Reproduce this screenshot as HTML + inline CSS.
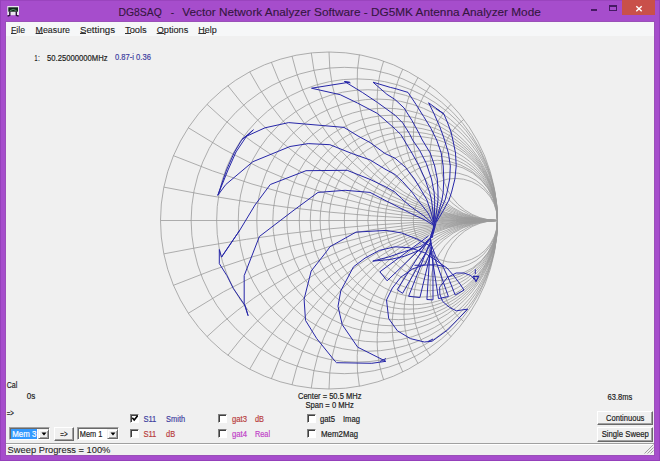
<!DOCTYPE html>
<html><head><meta charset="utf-8">
<style>
*{margin:0;padding:0;box-sizing:border-box}
html,body{width:660px;height:461px;overflow:hidden;background:#a64dcc}
.b{position:absolute}
svg{position:absolute;left:0;top:0}
text{font-family:"Liberation Sans",sans-serif}
</style></head><body>
<div class="b" style="left:0;top:0;width:660px;height:1px;background:#9a44be"></div>
<div class="b" style="left:0;top:0;width:1px;height:461px;background:#9540bb"></div>
<div class="b" style="left:659px;top:0;width:1px;height:461px;background:#9540bb"></div>
<div class="b" style="left:0;top:460px;width:660px;height:1px;background:#9540bb"></div>
<div class="b" style="left:5px;top:21px;width:650px;height:435px;background:#9a50b8"></div>
<div class="b" style="left:622px;top:0;width:33px;height:15px;background:#c9504a"></div>
<div class="b" style="left:6px;top:22px;width:648px;height:433px;background:#f0f0f0"></div>
<div class="b" style="left:6px;top:22px;width:648px;height:14px;background:#f6f7f8"></div>
<!-- status bar line -->
<div class="b" style="left:6px;top:443px;width:648px;height:1px;background:#a0a0a0"></div>
<div class="b" style="left:6px;top:444px;width:648px;height:1px;background:#ffffff"></div>

<svg width="660" height="461" viewBox="0 0 660 461">
<g fill="none" stroke="#9a9a9a" stroke-width="0.8">
<circle cx="329.0" cy="220.5" r="168.5"/>
<path d="M160.50,220.5H497.50"/>
<path d="M191.14,220.50a153.18,153.18 0 1,0 306.36,0a153.18,153.18 0 1,0 -306.36,0"/>
<path d="M216.67,220.50a140.42,140.42 0 1,0 280.83,0a140.42,140.42 0 1,0 -280.83,0"/>
<path d="M238.27,220.50a129.62,129.62 0 1,0 259.23,0a129.62,129.62 0 1,0 -259.23,0"/>
<path d="M256.79,220.50a120.36,120.36 0 1,0 240.71,0a120.36,120.36 0 1,0 -240.71,0"/>
<path d="M272.83,220.50a112.33,112.33 0 1,0 224.67,0a112.33,112.33 0 1,0 -224.67,0"/>
<path d="M286.88,220.50a105.31,105.31 0 1,0 210.62,0a105.31,105.31 0 1,0 -210.62,0"/>
<path d="M299.26,220.50a99.12,99.12 0 1,0 198.24,0a99.12,99.12 0 1,0 -198.24,0"/>
<path d="M310.28,220.50a93.61,93.61 0 1,0 187.22,0a93.61,93.61 0 1,0 -187.22,0"/>
<path d="M320.13,220.50a88.68,88.68 0 1,0 177.37,0a88.68,88.68 0 1,0 -177.37,0"/>
<path d="M329.00,220.50a84.25,84.25 0 1,0 168.50,0a84.25,84.25 0 1,0 -168.50,0"/>
<path d="M344.32,220.50a76.59,76.59 0 1,0 153.18,0a76.59,76.59 0 1,0 -153.18,0"/>
<path d="M357.08,220.50a70.21,70.21 0 1,0 140.42,0a70.21,70.21 0 1,0 -140.42,0"/>
<path d="M367.88,220.50a64.81,64.81 0 1,0 129.62,0a64.81,64.81 0 1,0 -129.62,0"/>
<path d="M377.14,220.50a60.18,60.18 0 1,0 120.36,0a60.18,60.18 0 1,0 -120.36,0"/>
<path d="M385.17,220.50a56.17,56.17 0 1,0 112.33,0a56.17,56.17 0 1,0 -112.33,0"/>
<path d="M401.21,220.50a48.14,48.14 0 1,0 96.29,0a48.14,48.14 0 1,0 -96.29,0"/>
<path d="M413.25,220.50a42.12,42.12 0 1,0 84.25,0a42.12,42.12 0 1,0 -84.25,0"/>
<path d="M497.50,220.50A1685.00,1685.00 0 0,1 163.84,187.13"/>
<path d="M497.50,220.50A1685.00,1685.00 0 0,0 163.84,253.87"/>
<path d="M497.50,220.50A842.50,842.50 0 0,1 173.46,155.69"/>
<path d="M497.50,220.50A842.50,842.50 0 0,0 173.46,285.31"/>
<path d="M497.50,220.50A561.67,561.67 0 0,1 188.33,127.75"/>
<path d="M497.50,220.50A561.67,561.67 0 0,0 188.33,313.25"/>
<path d="M497.50,220.50A421.25,421.25 0 0,1 206.98,104.29"/>
<path d="M497.50,220.50A421.25,421.25 0 0,0 206.98,336.71"/>
<path d="M497.50,220.50A337.00,337.00 0 0,1 227.90,85.70"/>
<path d="M497.50,220.50A337.00,337.00 0 0,0 227.90,355.30"/>
<path d="M497.50,220.50A280.83,280.83 0 0,1 249.71,71.82"/>
<path d="M497.50,220.50A280.83,280.83 0 0,0 249.71,369.18"/>
<path d="M497.50,220.50A240.71,240.71 0 0,1 271.33,62.18"/>
<path d="M497.50,220.50A240.71,240.71 0 0,0 271.33,378.82"/>
<path d="M497.50,220.50A210.62,210.62 0 0,1 292.01,56.11"/>
<path d="M497.50,220.50A210.62,210.62 0 0,0 292.01,384.89"/>
<path d="M497.50,220.50A187.22,187.22 0 0,1 311.31,52.93"/>
<path d="M497.50,220.50A187.22,187.22 0 0,0 311.31,388.07"/>
<path d="M497.50,220.50A168.50,168.50 0 0,1 329.00,52.00"/>
<path d="M497.50,220.50A168.50,168.50 0 0,0 329.00,389.00"/>
<path d="M497.50,220.50A140.42,140.42 0 0,1 359.39,54.76"/>
<path d="M497.50,220.50A140.42,140.42 0 0,0 359.39,386.24"/>
<path d="M497.50,220.50A120.36,120.36 0 0,1 383.65,61.11"/>
<path d="M497.50,220.50A120.36,120.36 0 0,0 383.65,379.89"/>
<path d="M497.50,220.50A105.31,105.31 0 0,1 402.84,69.04"/>
<path d="M497.50,220.50A105.31,105.31 0 0,0 402.84,371.96"/>
<path d="M497.50,220.50A93.61,93.61 0 0,1 418.02,77.43"/>
<path d="M497.50,220.50A93.61,93.61 0 0,0 418.02,363.57"/>
<path d="M497.50,220.50A84.25,84.25 0 0,1 430.10,85.70"/>
<path d="M497.50,220.50A84.25,84.25 0 0,0 430.10,355.30"/>
<path d="M497.50,220.50A67.40,67.40 0 0,1 451.02,104.29"/>
<path d="M497.50,220.50A67.40,67.40 0 0,0 451.02,336.71"/>
<path d="M497.50,220.50A56.17,56.17 0 0,1 463.80,119.40"/>
<path d="M497.50,220.50A56.17,56.17 0 0,0 463.80,321.60"/>
</g>
<g fill="none" stroke="#2626a8" stroke-width="1.0" stroke-linejoin="round">
<polyline points="373.0,82.2 390.3,87.4 395.0,88.5 408.0,92.4 415.8,104.1 423.6,116.5 430.8,128.2 436.7,140.0 441.2,153.0 443.2,166.0 443.8,179.0 443.2,192.1 441.9,200.0 438.5,212.0 435.5,222.0"/>
<polyline points="373.0,82.2 386.9,94.3 395.0,99.5 404.1,108.0 411.9,120.4 418.4,132.1 422.3,140.0 430.2,153.0 434.7,166.0 437.3,179.0 438.0,192.1 438.0,200.0 436.5,212.0 434.8,222.0"/>
<polyline points="428.6,102.8 443.8,113.9 447.7,123.0 451.0,132.1 452.9,140.0 455.5,153.0 456.2,166.0 454.9,179.0 451.6,192.1 449.0,200.0 443.0,211.0 436.5,222.0"/>
<polyline points="428.6,102.8 434.1,113.9 439.3,125.6 443.2,136.0 444.5,140.0 448.4,153.0 450.3,166.0 449.7,179.0 447.1,192.1 445.1,200.0 440.0,211.0 435.8,222.0"/>
<polyline points="436.0,108.5 443.8,113.9"/>
<polyline points="311.5,88.2 349.5,82.2 344.5,81.5 362.6,92.6 377.5,102.5 395.0,115.2 402.8,123.0 409.3,133.4 412.6,140.0 419.7,150.4 426.3,163.4 431.5,179.0 434.1,192.1 434.7,200.0 434.5,212.0 434.2,222.0"/>
<polyline points="311.5,88.2 340.2,94.7 357.4,103.0 377.3,113.4 395.0,128.8 400.9,134.7 404.1,140.0 411.9,153.0 419.1,166.0 425.0,179.0 429.5,192.1 431.5,200.0 433.0,212.0 433.8,222.0"/>
<polyline points="344.5,81.5 350.5,83.0"/>
<polyline points="242.1,139.3 246.3,136.3 265.0,127.8 288.7,122.6 344.0,127.4 358.0,136.0 370.0,142.5 385.0,153.5 395.0,158.2 405.4,167.3 414.5,179.0 422.3,192.1 426.9,200.0 431.0,212.0 433.5,222.0"/>
<polyline points="242.1,139.3 253.4,129.8"/>
<polyline points="253.4,129.8 246.0,137.0 236.0,152.0 228.0,170.0 217.8,195.3"/>
<polyline points="242.1,139.3 234.5,152.0 226.5,170.0 217.8,195.3"/>
<polyline points="217.8,195.3 225.8,184.5 252.9,161.7 290.0,146.5 308.2,143.6 329.9,144.7 351.6,153.4 370.0,159.9 385.0,169.1 395.0,174.5 402.8,181.7 411.9,192.1 417.8,200.0 428.0,213.0 433.0,223.0"/>
<polyline points="221.5,257.1 239.9,230.0 255.0,205.0 270.3,184.5 290.0,176.9 306.0,170.7 347.2,170.3 370.0,179.4 385.0,186.5 395.0,192.1 401.5,198.6 410.0,206.0 424.0,216.0 433.0,224.0"/>
<polyline points="239.9,230.0 221.5,257.1 219.3,249.5 219.3,263.6 226.9,275.6 233.4,288.6 245.3,305.9 248.1,315.7 244.2,303.8 244.2,275.6 259.4,236.5 294.1,210.0 318.0,192.4 345.1,190.3 370.0,192.4 385.0,200.3 395.0,205.4 412.0,214.0 425.0,220.0 433.0,225.0"/>
<polyline points="433.8,222.0 433.3,228.0 430.0,238.0"/>
<polyline points="434.6,222.0 433.8,228.0 430.7,238.0"/>
<polyline points="435.4,222.0 434.2,228.0 431.3,238.0"/>
<polyline points="436.2,222.0 434.7,228.0 432.0,238.0"/>
<polyline points="430.5,238.0 430.0,245.9 417.8,239.4 401.5,232.9 386.1,230.4 370.0,231.3 356.0,232.1 330.0,246.7 326.7,251.3 311.2,271.0 304.1,299.2 305.5,320.4 316.8,338.7 335.1,361.3 336.5,362.7 371.8,363.3 385.9,361.3 357.7,347.2 342.2,324.6 338.0,306.3 340.8,290.8 353.5,266.8 365.0,258.1 379.3,250.4 394.8,246.8 409.6,247.7 424.3,252.6 436.0,260.4 447.0,268.0 454.0,276.0 460.0,284.0 464.0,290.1 455.2,295.0 449.4,280.4 443.5,267.7 436.0,257.0 431.0,244.0 430.5,238.0"/>
<polyline points="380.0,361.5 386.0,358.5"/>
<polyline points="430.5,238.0 421.1,246.2 404.4,251.6 388.9,256.9 372.8,261.1 390.0,259.5 404.4,256.3 420.0,250.0 430.5,238.0"/>
<polyline points="428.5,236.0 379.9,271.8 387.1,280.8 430.5,239.0"/>
<polyline points="429.1,239.5 397.2,289.7 402.6,293.3 431.3,243.0"/>
<polyline points="429.7,243.0 408.6,296.3 419.9,297.5 432.1,247.0"/>
<polyline points="430.3,246.5 426.9,299.5 433.0,299.9 432.9,251.0"/>
<polyline points="430.9,250.0 438.5,298.6 448.4,296.5 433.7,255.0"/>
<polyline points="414.5,265.3 436.0,264.8 444.0,266.5"/>
<polyline points="430.5,238.0 431.5,250.0 425.0,264.7 412.7,268.9 400.8,277.2 392.4,288.0 386.5,300.0 388.7,318.6 397.4,330.8 410.4,338.6 424.3,342.0 432.1,341.2 447.7,329.9 467.7,309.1 461.6,310.0 456.4,310.8 449.4,307.3 442.5,301.3 439.9,294.3 439.6,287.2 447.4,277.4 456.2,273.0 464.0,273.0 470.9,275.5 474.3,279.4"/>
<polyline points="428.0,341.5 433.0,339.0"/>
<path d="M473.3,276.3H478.7L476,281.5Z" stroke-width="1.2"/>
<path d="M475.3,269.2V274" stroke-width="1"/>
</g>
</svg>
<div class="b" style="left:130px;top:414px;width:9px;height:9px;background:#fff;border-top:1px solid #808080;border-left:1px solid #808080;border-right:1px solid #fff;border-bottom:1px solid #fff;box-shadow:inset 1px 1px 0 #404040"></div>
<div class="b" style="left:130px;top:429px;width:9px;height:9px;background:#fff;border-top:1px solid #808080;border-left:1px solid #808080;border-right:1px solid #fff;border-bottom:1px solid #fff;box-shadow:inset 1px 1px 0 #404040"></div>
<div class="b" style="left:218px;top:414px;width:9px;height:9px;background:#fff;border-top:1px solid #808080;border-left:1px solid #808080;border-right:1px solid #fff;border-bottom:1px solid #fff;box-shadow:inset 1px 1px 0 #404040"></div>
<div class="b" style="left:218px;top:429px;width:9px;height:9px;background:#fff;border-top:1px solid #808080;border-left:1px solid #808080;border-right:1px solid #fff;border-bottom:1px solid #fff;box-shadow:inset 1px 1px 0 #404040"></div>
<div class="b" style="left:307px;top:414px;width:9px;height:9px;background:#fff;border-top:1px solid #808080;border-left:1px solid #808080;border-right:1px solid #fff;border-bottom:1px solid #fff;box-shadow:inset 1px 1px 0 #404040"></div>
<div class="b" style="left:307px;top:429px;width:9px;height:9px;background:#fff;border-top:1px solid #808080;border-left:1px solid #808080;border-right:1px solid #fff;border-bottom:1px solid #fff;box-shadow:inset 1px 1px 0 #404040"></div>
<div class="b" style="left:597px;top:411px;width:56px;height:14px;background:#f0f0f0;border-top:1px solid #fff;border-left:1px solid #fff;border-right:1px solid #696969;border-bottom:1px solid #696969;box-shadow:inset -1px -1px 0 #a0a0a0"></div>
<div class="b" style="left:597px;top:427px;width:56px;height:15px;background:#f0f0f0;border-top:1px solid #fff;border-left:1px solid #fff;border-right:1px solid #696969;border-bottom:1px solid #696969;box-shadow:inset -1px -1px 0 #a0a0a0"></div>
<div class="b" style="left:54px;top:427px;width:20px;height:14px;background:#f0f0f0;border-top:1px solid #fff;border-left:1px solid #fff;border-right:1px solid #696969;border-bottom:1px solid #696969;box-shadow:inset -1px -1px 0 #a0a0a0"></div>
<div class="b" style="left:9px;top:427px;width:41px;height:13px;background:#fff;border-top:1px solid #a0a0a0;border-left:1px solid #a0a0a0;border-right:1px solid #fff;border-bottom:1px solid #fff;box-shadow:inset 1px 1px 0 #696969"></div>
<div class="b" style="left:77px;top:427px;width:42px;height:13px;background:#fff;border-top:1px solid #a0a0a0;border-left:1px solid #a0a0a0;border-right:1px solid #fff;border-bottom:1px solid #fff;box-shadow:inset 1px 1px 0 #696969"></div>
<div class="b" style="left:38px;top:429px;width:11px;height:10px;background:#f0f0f0;border-top:1px solid #f0f0f0;border-left:1px solid #f0f0f0;border-right:1px solid #696969;border-bottom:1px solid #696969;box-shadow:inset 1px 1px 0 #fff, inset -1px -1px 0 #a0a0a0"></div>
<div class="b" style="left:107px;top:429px;width:11px;height:10px;background:#f0f0f0;border-top:1px solid #f0f0f0;border-left:1px solid #f0f0f0;border-right:1px solid #696969;border-bottom:1px solid #696969;box-shadow:inset 1px 1px 0 #fff, inset -1px -1px 0 #a0a0a0"></div>
<div class="b" style="left:11px;top:429px;width:26px;height:10px;background:#3399ff"></div>
<svg width="660" height="461" viewBox="0 0 660 461">
<text x="118.5" y="15.7" font-size="10.3" fill="#34163f" stroke="#34163f" stroke-width="0.1" textLength="43.30" lengthAdjust="spacingAndGlyphs" xml:space="preserve">DG8SAQ</text>
<text x="170.7" y="15.7" font-size="10.3" fill="#34163f" stroke="#34163f" stroke-width="0.1" textLength="3.40" lengthAdjust="spacingAndGlyphs" xml:space="preserve">-</text>
<text x="182.3" y="15.7" font-size="10.3" fill="#34163f" stroke="#34163f" stroke-width="0.1" textLength="358.50" lengthAdjust="spacingAndGlyphs" xml:space="preserve">Vector Network Analyzer Software - DG5MK Antenna Analyzer Mode</text>
<text x="11" y="32.5" font-size="9.2" fill="#1e1e1e" stroke="#1e1e1e" stroke-width="0.12" textLength="14.00" lengthAdjust="spacingAndGlyphs" xml:space="preserve">File</text>
<rect x="11" y="33" width="5.5" height="1" fill="#333"/>
<text x="35.6" y="32.5" font-size="9.2" fill="#1e1e1e" stroke="#1e1e1e" stroke-width="0.12" textLength="34.40" lengthAdjust="spacingAndGlyphs" xml:space="preserve">Measure</text>
<rect x="35.6" y="33" width="7.399999999999999" height="1" fill="#333"/>
<text x="80" y="32.5" font-size="9.2" fill="#1e1e1e" stroke="#1e1e1e" stroke-width="0.12" textLength="35.00" lengthAdjust="spacingAndGlyphs" xml:space="preserve">Settings</text>
<rect x="80" y="33" width="6" height="1" fill="#333"/>
<text x="125" y="32.5" font-size="9.2" fill="#1e1e1e" stroke="#1e1e1e" stroke-width="0.12" textLength="21.70" lengthAdjust="spacingAndGlyphs" xml:space="preserve">Tools</text>
<rect x="125" y="33" width="6" height="1" fill="#333"/>
<text x="156.7" y="32.5" font-size="9.2" fill="#1e1e1e" stroke="#1e1e1e" stroke-width="0.12" textLength="31.60" lengthAdjust="spacingAndGlyphs" xml:space="preserve">Options</text>
<rect x="156.7" y="33" width="7.300000000000011" height="1" fill="#333"/>
<text x="198.3" y="32.5" font-size="9.2" fill="#1e1e1e" stroke="#1e1e1e" stroke-width="0.12" textLength="18.40" lengthAdjust="spacingAndGlyphs" xml:space="preserve">Help</text>
<rect x="198.3" y="33" width="7.699999999999989" height="1" fill="#333"/>
<text x="34.6" y="60.7" font-size="9" fill="#1a1a1a" stroke="#1a1a1a" stroke-width="0.18" textLength="3.00" lengthAdjust="spacingAndGlyphs" xml:space="preserve">1</text>
<text x="38.2" y="60.7" font-size="9" fill="#1a1a1a" stroke="#1a1a1a" stroke-width="0.18" textLength="1.40" lengthAdjust="spacingAndGlyphs" xml:space="preserve">:</text>
<text x="47" y="60.7" font-size="9" fill="#1a1a1a" stroke="#1a1a1a" stroke-width="0.18" textLength="60.60" lengthAdjust="spacingAndGlyphs" xml:space="preserve">50.25000000MHz</text>
<text x="115" y="60.4" font-size="9" fill="#3c3ca0" stroke="#3c3ca0" stroke-width="0.18" textLength="35.90" lengthAdjust="spacingAndGlyphs" xml:space="preserve">0.87-i 0.36</text>
<text x="6.7" y="387.7" font-size="8.6" fill="#1a1a1a" stroke="#1a1a1a" stroke-width="0.18" textLength="10.50" lengthAdjust="spacingAndGlyphs" xml:space="preserve">Cal</text>
<text x="26.7" y="399.2" font-size="8.6" fill="#1a1a1a" stroke="#1a1a1a" stroke-width="0.18" textLength="8.50" lengthAdjust="spacingAndGlyphs" xml:space="preserve">0s</text>
<text x="6.7" y="416.2" font-size="8.6" fill="#1a1a1a" stroke="#1a1a1a" stroke-width="0.18" textLength="7.20" lengthAdjust="spacingAndGlyphs" xml:space="preserve">=&gt;</text>
<text x="298" y="399.3" font-size="8.6" fill="#1a1a1a" stroke="#1a1a1a" stroke-width="0.18" textLength="63.40" lengthAdjust="spacingAndGlyphs" xml:space="preserve">Center = 50.5 MHz</text>
<text x="305.5" y="408.2" font-size="8.6" fill="#1a1a1a" stroke="#1a1a1a" stroke-width="0.18" textLength="48.40" lengthAdjust="spacingAndGlyphs" xml:space="preserve">Span = 0 MHz</text>
<text x="607.5" y="399.8" font-size="8.6" fill="#1a1a1a" stroke="#1a1a1a" stroke-width="0.18" textLength="24.70" lengthAdjust="spacingAndGlyphs" xml:space="preserve">63.8ms</text>
<text x="143.4" y="421.8" font-size="8.8" fill="#4040a0" stroke="#4040a0" stroke-width="0.18" textLength="12.90" lengthAdjust="spacingAndGlyphs" xml:space="preserve">S11</text>
<text x="166.1" y="421.8" font-size="8.8" fill="#4040a0" stroke="#4040a0" stroke-width="0.18" textLength="19.00" lengthAdjust="spacingAndGlyphs" xml:space="preserve">Smith</text>
<text x="143.4" y="437" font-size="8.8" fill="#b83c3c" stroke="#b83c3c" stroke-width="0.18" textLength="12.90" lengthAdjust="spacingAndGlyphs" xml:space="preserve">S11</text>
<text x="166.1" y="437" font-size="8.8" fill="#b83c3c" stroke="#b83c3c" stroke-width="0.18" textLength="9.10" lengthAdjust="spacingAndGlyphs" xml:space="preserve">dB</text>
<text x="232" y="421.8" font-size="8.8" fill="#b83c3c" stroke="#b83c3c" stroke-width="0.18" textLength="15.00" lengthAdjust="spacingAndGlyphs" xml:space="preserve">gat3</text>
<text x="255" y="421.8" font-size="8.8" fill="#b83c3c" stroke="#b83c3c" stroke-width="0.18" textLength="9.00" lengthAdjust="spacingAndGlyphs" xml:space="preserve">dB</text>
<text x="232" y="437" font-size="8.8" fill="#c040c8" stroke="#c040c8" stroke-width="0.18" textLength="15.00" lengthAdjust="spacingAndGlyphs" xml:space="preserve">gat4</text>
<text x="255" y="437" font-size="8.8" fill="#c040c8" stroke="#c040c8" stroke-width="0.18" textLength="15.00" lengthAdjust="spacingAndGlyphs" xml:space="preserve">Real</text>
<text x="320" y="421.8" font-size="8.8" fill="#1a1a1a" stroke="#1a1a1a" stroke-width="0.18" textLength="15.00" lengthAdjust="spacingAndGlyphs" xml:space="preserve">gat5</text>
<text x="343" y="421.8" font-size="8.8" fill="#1a1a1a" stroke="#1a1a1a" stroke-width="0.18" textLength="17.00" lengthAdjust="spacingAndGlyphs" xml:space="preserve">Imag</text>
<text x="321" y="437" font-size="8.8" fill="#1a1a1a" stroke="#1a1a1a" stroke-width="0.18" textLength="22.00" lengthAdjust="spacingAndGlyphs" xml:space="preserve">Mem2</text>
<text x="343" y="437" font-size="8.8" fill="#1a1a1a" stroke="#1a1a1a" stroke-width="0.18" textLength="15.00" lengthAdjust="spacingAndGlyphs" xml:space="preserve">Mag</text>
<text x="606.1" y="420.5" font-size="8.8" fill="#1a1a1a" stroke="#1a1a1a" stroke-width="0.18" textLength="38.30" lengthAdjust="spacingAndGlyphs" xml:space="preserve">Continuous</text>
<text x="601.7" y="436.6" font-size="8.8" fill="#1a1a1a" stroke="#1a1a1a" stroke-width="0.18" textLength="47.10" lengthAdjust="spacingAndGlyphs" xml:space="preserve">Single Sweep</text>
<text x="60.2" y="437.3" font-size="8.8" fill="#1a1a1a" stroke="#1a1a1a" stroke-width="0.18" textLength="7.40" lengthAdjust="spacingAndGlyphs" xml:space="preserve">=&gt;</text>
<text x="79.8" y="437.3" font-size="8.8" fill="#1a1a1a" stroke="#1a1a1a" stroke-width="0.18" textLength="22.50" lengthAdjust="spacingAndGlyphs" xml:space="preserve">Mem 1</text>
<text x="12.3" y="437.3" font-size="8.8" fill="#ffffff" stroke="#ffffff" stroke-width="0.18" textLength="24.00" lengthAdjust="spacingAndGlyphs" xml:space="preserve">Mem 3</text>
<text x="7.6" y="453" font-size="9.6" fill="#262626" stroke="#262626" stroke-width="0.1" textLength="102.80" lengthAdjust="spacingAndGlyphs" xml:space="preserve">Sweep Progress = 100%</text>
<rect x="591" y="9" width="6" height="2" fill="#461a64"/>
<rect x="609.5" y="5.5" width="7" height="5" fill="none" stroke="#461a64" stroke-width="1"/><rect x="609" y="5" width="8" height="2" fill="#461a64"/>
<path d="M636.3,6.2L641.7,11.2M641.7,6.2L636.3,11.2" stroke="#fff" stroke-width="1.4"/>
<rect x="7.3" y="6" width="11.7" height="9.2" fill="#e8e4ee"/><rect x="8.3" y="7.3" width="9.7" height="4.4" fill="#0f2a18"/><path d="M10,10.6Q13,8.2 16.5,10.6" fill="none" stroke="#5f9f6f" stroke-width="0.9"/><path d="M9.8,11.5V15.3L7.6,16.2M16.3,11.5V15.3L18.6,16.2" fill="none" stroke="#2a0f3a" stroke-width="1.4"/>
<path d="M132.3,417.8L134.2,420L137.6,415.8" fill="none" stroke="#000" stroke-width="1.6"/>
<path d="M41.5,432.5H46.5L44,435.5Z" fill="#000"/><path d="M110.5,432.5H115.5L113,435.5Z" fill="#000"/>
<path d="M644.5,453.5L653.5,444.5M647.5,453.5L653.5,447.5M650.5,453.5L653.5,450.5" stroke="#a0a0a0" stroke-width="1"/>
</svg>
</body></html>
